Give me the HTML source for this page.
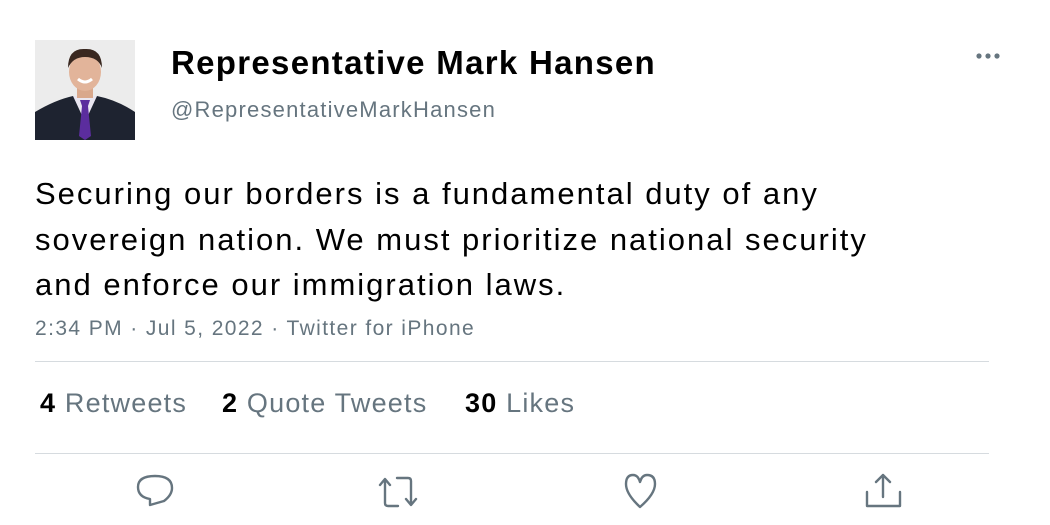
<!DOCTYPE html>
<html><head><meta charset="utf-8"><style>
body{margin:0;width:1050px;height:525px;background:#fff;font-family:"Liberation Sans",Arial,sans-serif;position:relative;overflow:hidden}
.a{position:absolute;white-space:nowrap}
.name{left:171px;top:44px;font-size:33px;font-weight:bold;color:#000;letter-spacing:1.3px}
.handle{left:171px;top:97px;font-size:22px;color:#66757f;letter-spacing:1.2px}
.body{left:35px;top:171px;font-size:31px;line-height:45.5px;color:#000;letter-spacing:2px}
.meta{left:35px;top:317px;font-size:21px;color:#66757f;letter-spacing:1.4px}
.hr{left:35px;width:954px;height:1px;background:#d6dbdf}
.st{top:388px;font-size:27px;color:#66757f;letter-spacing:1.2px}
.st b{color:#000}
</style></head><body>
<svg class="a" style="left:35px;top:40px" width="100" height="100" viewBox="0 0 100 100">
<rect width="100" height="100" fill="#ececec"/>
<path d="M0 100 L0 72 Q20 60 38 56 L62 56 Q82 60 100 72 L100 100Z" fill="#1e2330"/>
<path d="M38 56 L50 82 L62 56Z" fill="#e9e6f0"/>
<path d="M45 60 L55 60 L53 66 L56 96 L50 100 L44 96 L47 66Z" fill="#5b2d9e"/>
<rect x="42" y="46" width="16" height="12" fill="#d9a88c"/>
<ellipse cx="50" cy="32" rx="16" ry="19" fill="#e2b49a"/>
<path d="M33 28 Q33 8 50 9 Q67 8 67 28 Q63 17 50 17 Q38 17 33 28Z" fill="#3a2820"/>
<path d="M43 39 Q50 45 57 39" stroke="#fff" stroke-width="3" fill="none"/>
</svg>
<div class="a name">Representative Mark Hansen</div>
<div class="a handle">@RepresentativeMarkHansen</div>
<svg class="a" style="left:975px;top:51px" width="28" height="10"><circle cx="4" cy="5" r="2.6" fill="#66757f"/><circle cx="13" cy="5" r="2.6" fill="#66757f"/><circle cx="22" cy="5" r="2.6" fill="#66757f"/></svg>
<div class="a body">Securing our borders is a fundamental duty of any<br>sovereign nation. We must prioritize national security<br>and enforce our immigration laws.</div>
<div class="a meta">2:34 PM · Jul 5, 2022 · Twitter for iPhone</div>
<div class="a hr" style="top:361px"></div>
<div class="a st" style="left:40px"><b>4</b> Retweets</div>
<div class="a st" style="left:222px"><b>2</b> Quote Tweets</div>
<div class="a st" style="left:465px"><b>30</b> Likes</div>
<div class="a hr" style="top:453px"></div>
<svg class="a" style="left:0;top:470px" width="1050" height="55" fill="none" stroke="#66757f" stroke-width="2.4" stroke-linecap="round" stroke-linejoin="round">
<path d="M150 35 L150 29 Q138 27 138 17 Q138 6 155 6 Q172 6 172 18 Q172 25 164 31 Z"/>
<path d="M385 10 L385 33 Q385 36 388 36 L398 36 M380 15 L385 9 L390 15 M397 8 L408 8 Q411 8 411 11 L411 34 M406 29 L411 35 L416 29"/>
<path d="M640 37 Q626 24 626 14 Q626 5 633 5 Q638 5 640 12 Q642 5 647 5 Q655 5 655 14 Q655 24 640 37Z"/>
<path d="M883 5 L883 27 M876 12 L883 5 L890 12 M867 22 L867 36 L900 36 L900 22"/>
</svg>
</body></html>
